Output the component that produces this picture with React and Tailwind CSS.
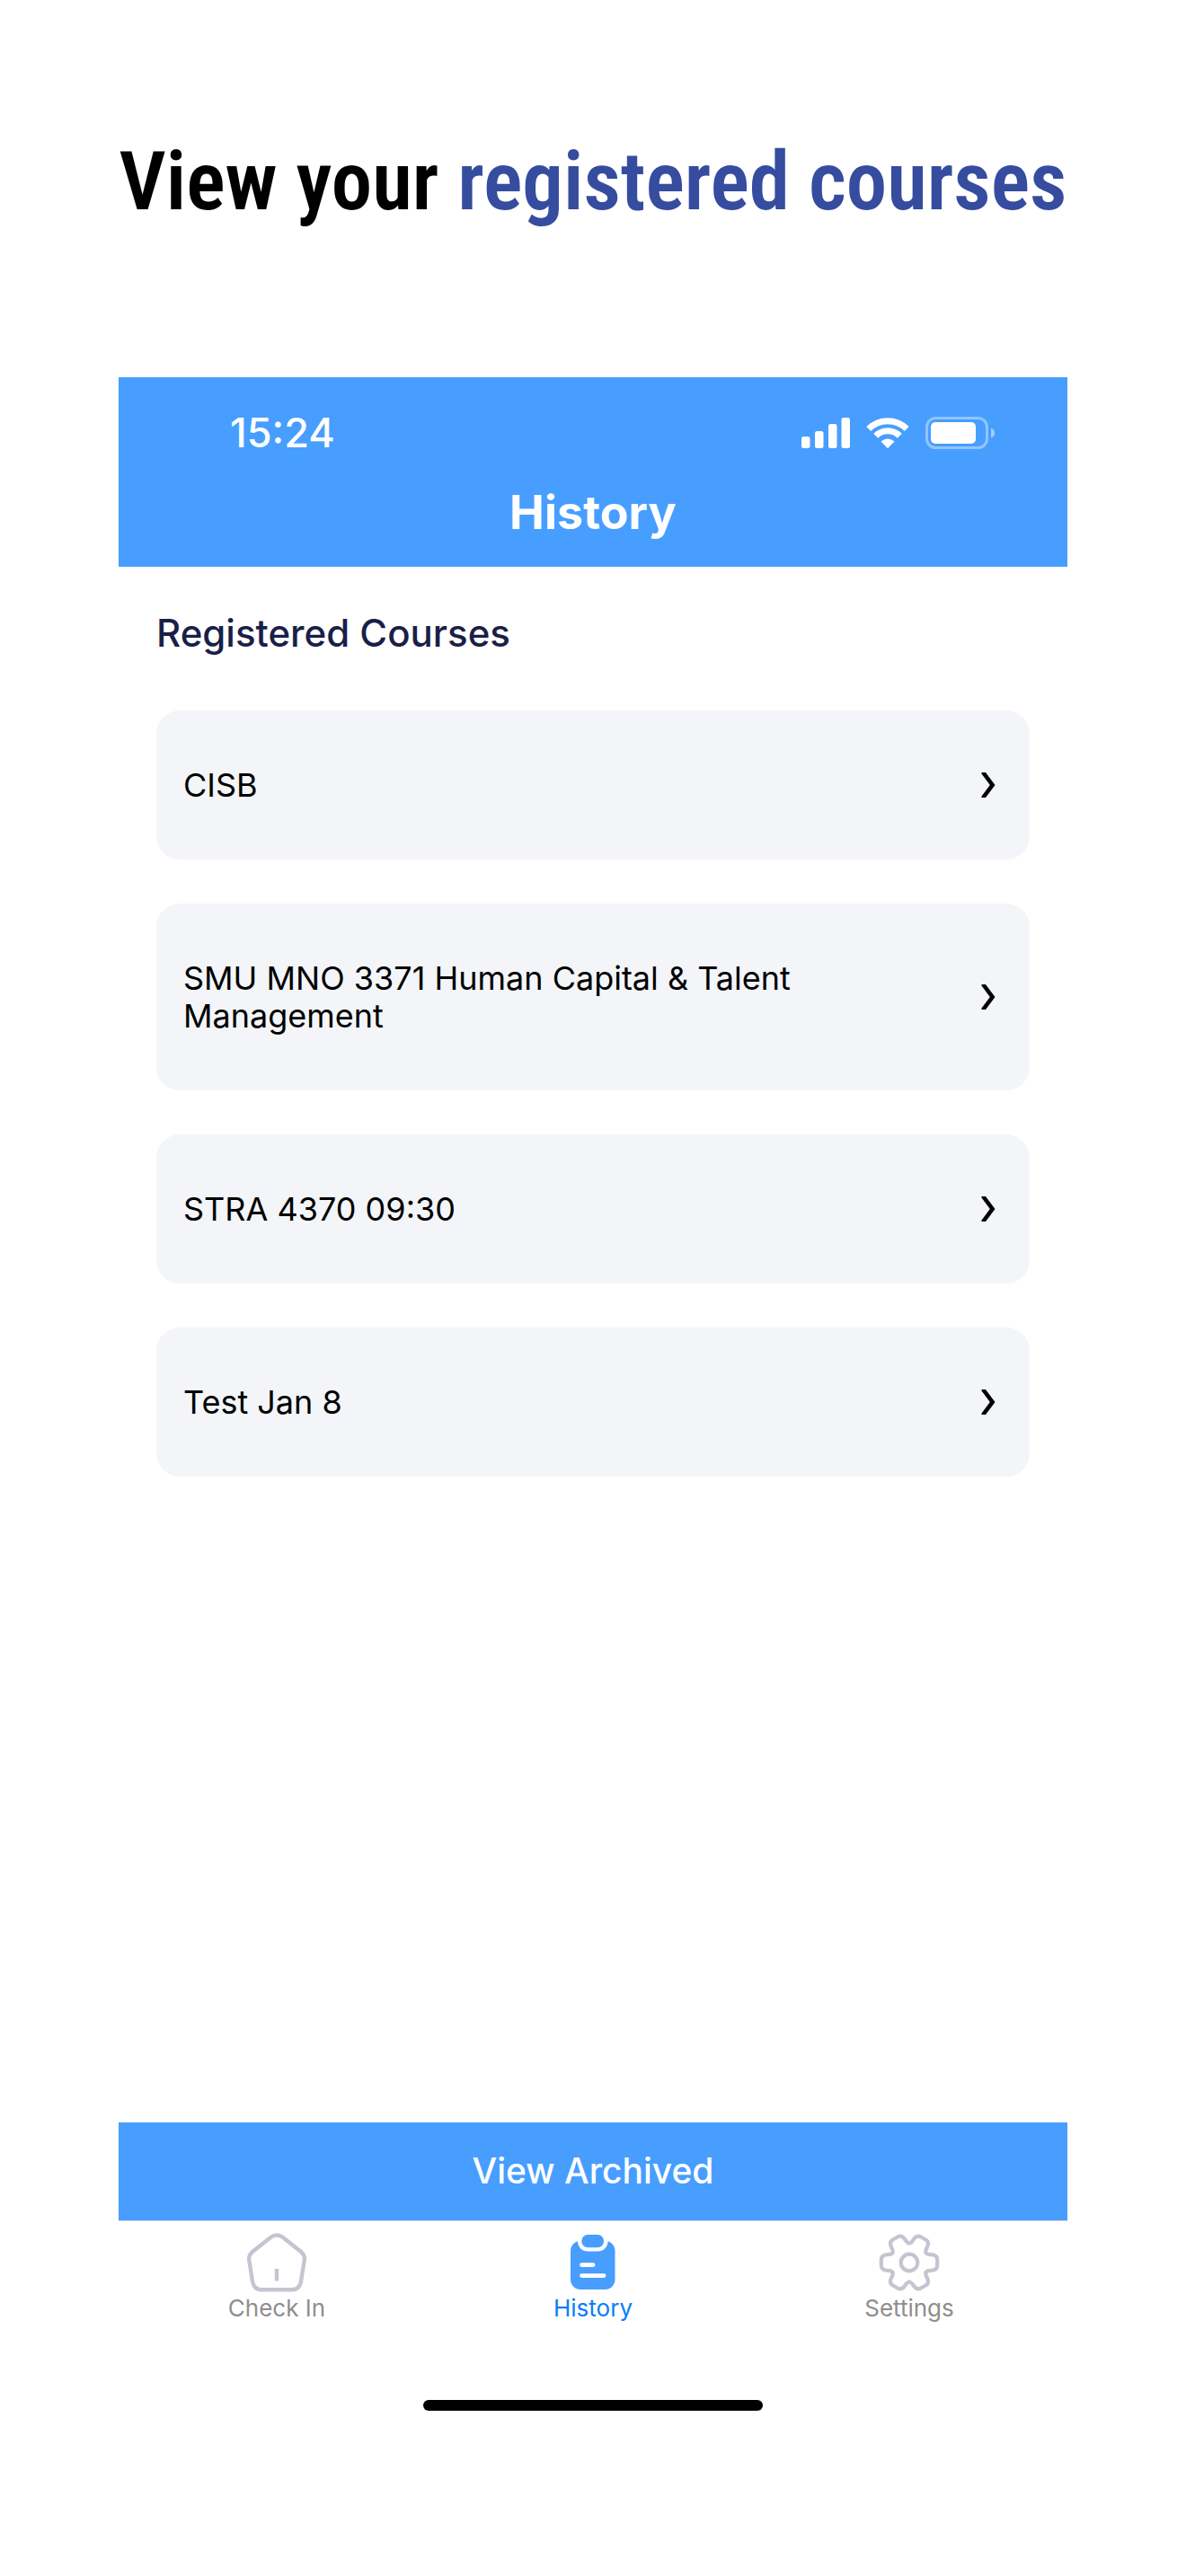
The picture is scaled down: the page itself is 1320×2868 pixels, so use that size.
const courses = [
  'CISB',
  'SMU MNO 3371 Human Capital & Talent Management',
  'STRA 4370 09:30',
  'Test Jan 8',
];

function SignalIcon() {
  return (
    <svg width="54" height="36" viewBox="0 0 54 36" fill="white" aria-hidden="true">
      <rect x="0" y="22" width="9.5" height="13" rx="2.5" />
      <rect x="15" y="16" width="9.5" height="19" rx="2.5" />
      <rect x="30" y="8" width="9.5" height="27" rx="2.5" />
      <rect x="44.5" y="1" width="9.5" height="34" rx="2.5" />
    </svg>
  );
}

function WifiIcon() {
  return (
    <svg width="48" height="36" viewBox="0 0 48 36" aria-hidden="true">
      <g fill="none" stroke="white">
        <path d="M2.8 13.4 A30 30 0 0 1 45.2 13.4" strokeWidth="7" />
        <path d="M10.7 21.3 A18.8 18.8 0 0 1 37.3 21.3" strokeWidth="7" />
      </g>
      <path d="M24 35.3 L16.5 27.6 Q24 21.6 31.5 27.6 Z" fill="white" />
    </svg>
  );
}

function BatteryIcon() {
  return (
    <svg width="78" height="36" viewBox="0 0 78 36" fill="white" aria-hidden="true">
      <rect x="1.5" y="1.5" width="67" height="33" rx="10" fill="none" stroke="white" strokeOpacity="0.4" strokeWidth="3" />
      <rect x="6" y="6" width="50" height="24" rx="5" />
      <path d="M73 12.5 Q77 14 77 18 Q77 22 73 23.5 Z" fillOpacity="0.5" />
    </svg>
  );
}

function ChevronIcon() {
  return (
    <svg className="shrink-0" width="16" height="28" viewBox="0 0 16 28" aria-hidden="true">
      <path d="M0.5 0 H5 L15.5 14 L5 28 H0.5 L0.5 26.5 L9.8 14 L0.5 1.5 Z" />
    </svg>
  );
}

function HomeIcon() {
  return (
    <svg width="66" height="66" viewBox="0 0 66 66" fill="none" stroke="#c6c4d0" strokeWidth="4.4" aria-hidden="true">
      <path d="M26.5 4.8 Q33 0 39.5 4.8 L60 21 Q64.6 25 63.8 30 L60 54 Q58.3 63.2 50 63.2 H16 Q7.7 63.2 6 54 L2.2 30 Q1.4 25 6 21 Z" />
      <path d="M33 40 V53.5" />
    </svg>
  );
}

function ClipboardIcon() {
  return (
    <svg width="50" height="66" viewBox="0 -2 50 66" aria-hidden="true">
      <rect y="7" width="49.5" height="54" rx="11" fill="#479eff" />
      <rect x="8" y="-4" width="33.5" height="22.5" rx="11" fill="white" />
      <rect x="12.3" y="0" width="24.8" height="14.3" rx="7" fill="#479eff" />
      <path d="M12.6 33.7 H25 M12.6 45.6 H37" stroke="white" strokeWidth="4.8" strokeLinecap="round" />
    </svg>
  );
}

function GearIcon() {
  return (
    <svg width="68" height="66" viewBox="-34 -33 68 66" fill="none" stroke="#c6c4d0" strokeWidth="4.2" strokeLinecap="round" aria-hidden="true">
      {[0, 60, 120, 180, 240, 300].map((angle) => (
        <path
          key={angle}
          transform={`rotate(${angle})`}
          d="M18.6 -10.8 C19.6 -9.2 21.5 -8.8 24 -8.8 Q31.2 -8.5 31.2 -3 V3 Q31.2 8.5 24 8.8 C21.5 8.8 19.6 9.2 18.6 10.8"
        />
      ))}
      <circle r="9.3" />
    </svg>
  );
}

const tabs = [
  { label: 'Check In', Icon: HomeIcon },
  { label: 'History', Icon: ClipboardIcon, active: true },
  { label: 'Settings', Icon: GearIcon },
];

export default function App() {
  return (
    <div className="flex min-h-screen flex-col bg-white px-[10%] pb-46 font-['Inter',sans-serif] text-black">
      <h1 className="h-[420px] pt-[138px] text-center font-['Roboto_Condensed',sans-serif] text-[91px] leading-[128px] font-semibold whitespace-nowrap">
        View your <span className="text-[#354c9f]">registered courses</span>
      </h1>

      <header className="bg-[#479eff] pb-8 text-white">
        <div className="flex items-center justify-between pt-8 pr-20 pl-[124px]">
          <time className="text-[45px] leading-[60px] font-medium">15:24</time>
          <div className="flex items-center gap-[18px]">
            <SignalIcon />
            <WifiIcon />
            <BatteryIcon />
          </div>
        </div>
        <h2 className="pt-[30px] text-center text-[52px] leading-[57px] font-bold">History</h2>
      </header>

      <main className="flex flex-1 flex-col px-[42px] pt-[50px]">
        <h3 className="text-[42px] leading-12 font-medium text-[#1a1f48]">Registered Courses</h3>
        <ul className="mt-[62px] flex flex-col gap-[49px]">
          {courses.map((course) => (
            <li key={course}>
              <button
                type="button"
                className="flex w-full items-center justify-between rounded-[26px] bg-[#f3f5f9] py-[62px] pr-[38px] pl-[30px] text-left text-[36px] leading-[42px]"
              >
                <span className="max-w-[740px]">{course}</span>
                <ChevronIcon />
              </button>
            </li>
          ))}
        </ul>
      </main>

      <button type="button" className="h-[109px] bg-[#479eff] text-[39px] font-medium text-white">
        View Archived
      </button>

      <nav className="grid grid-cols-3 border-t border-gray-300 pt-[13px]">
        {tabs.map(({ label, Icon, active }) => (
          <a
            key={label}
            href="#"
            aria-current={active ? 'page' : undefined}
            className={`flex flex-col items-center text-[26px] leading-9 ${active ? 'text-[#087df8]' : 'text-[#8e8e8e]'}`}
          >
            <Icon />
            {label}
          </a>
        ))}
      </nav>

      <div className="mx-auto mt-[84px] h-3 w-[378px] rounded-full bg-black" />
    </div>
  );
}
